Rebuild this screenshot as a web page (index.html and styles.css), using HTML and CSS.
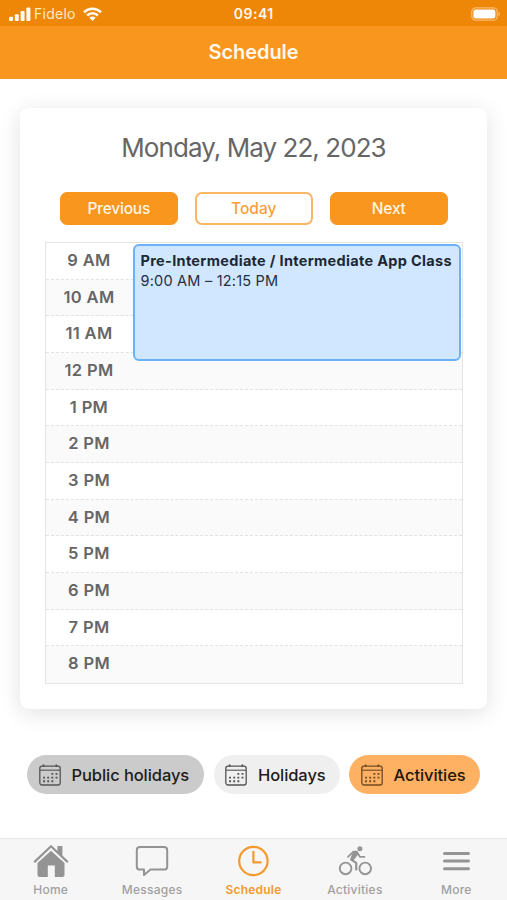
FILE: index.html
```html
<!DOCTYPE html>
<html lang="en">
<head>
<meta charset="utf-8">
<title>Schedule</title>
<link rel="stylesheet" href="styles.css">
</head>
<body>
<svg width="0" height="0" class="sprite">
  <symbol id="calendar" viewBox="0 0 22 22">
    <rect x="0.8" y="2.2" width="20.4" height="18.8" rx="2.2" fill="none" stroke="currentColor" stroke-width="1.3"/>
    <path d="M1 6.2H21" stroke="currentColor" stroke-width="1.1"/>
    <path d="M4.6 0.4V3M17.4 0.4V3" stroke="currentColor" stroke-width="1.8"/>
    <path d="M12.4 9.9H19M4.1 13.6H19M4.1 17.3H15" stroke="currentColor" stroke-width="1.9" stroke-dasharray="1.9 2.25" />
  </symbol>
</svg>
<header class="top">
  <div class="status">
    <div class="carrier">
      <svg class="signal" viewBox="0 0 22 14"><rect x="0" y="9.8" width="4" height="4.2" rx="1"/><rect x="5.8" y="7.2" width="4" height="6.8" rx="1"/><rect x="11.6" y="4" width="4" height="10" rx="1"/><rect x="17.4" y="0.4" width="4" height="13.6" rx="1"/></svg>
      <span class="carrier-name">Fidelo</span>
      <svg class="wifi" viewBox="0 0 19 14"><g fill="none" stroke="#fffaf0" stroke-width="2.6"><path d="M1 5.2A12.2 12.2 0 0 1 18 5.2"/><path d="M4.1 8.5A7.7 7.7 0 0 1 14.9 8.5"/></g><path d="M6.3 10.7A4.6 4.6 0 0 1 12.7 10.7L9.5 14Z" fill="#fffaf0"/></svg>
    </div>
    <span class="clock">09:41</span>
    <svg class="battery" viewBox="0 0 29 14"><rect x="0.8" y="0.8" width="25.4" height="12.4" rx="4" fill="none" stroke="#f9bb70" stroke-width="1.3"/><rect x="2.4" y="2.4" width="22" height="9.2" rx="2.3" fill="#fff"/><path d="M27.5 4.7Q29 5.5 29 7T27.5 9.3Z" fill="#f9bb70"/></svg>
  </div>
  <h1>Schedule</h1>
</header>
<main>
  <section class="card">
    <h2>Monday, May 22, 2023</h2>
    <div class="buttons">
      <button class="btn">Previous</button>
      <button class="btn outline">Today</button>
      <button class="btn">Next</button>
    </div>
    <div class="grid">
      <div class="row"><span>9 AM</span></div>
      <div class="row"><span>10 AM</span></div>
      <div class="row"><span>11 AM</span></div>
      <div class="row"><span>12 PM</span></div>
      <div class="row"><span>1 PM</span></div>
      <div class="row"><span>2 PM</span></div>
      <div class="row"><span>3 PM</span></div>
      <div class="row"><span>4 PM</span></div>
      <div class="row"><span>5 PM</span></div>
      <div class="row"><span>6 PM</span></div>
      <div class="row"><span>7 PM</span></div>
      <div class="row"><span>8 PM</span></div>
      <div class="event"><strong>Pre-Intermediate / Intermediate App Class</strong><span>9:00 AM – 12:15 PM</span></div>
    </div>
  </section>
  <div class="chips">
    <div class="chip public"><svg><use href="#calendar"/></svg><span>Public holidays</span></div>
    <div class="chip holidays"><svg><use href="#calendar"/></svg><span>Holidays</span></div>
    <div class="chip activities"><svg><use href="#calendar"/></svg><span>Activities</span></div>
  </div>
</main>
<nav class="tabs">
  <a class="tab"><svg viewBox="0 0 36 34"><path d="M18 6.8L31.5 19V31Q31.5 33 29.5 33H21.8V21.5H14.8V33H6.5Q4.5 33 4.5 31V19Z" fill="currentColor"/><path d="M1.8 17.6L18 2.2L34.2 17.6" fill="none" stroke="#f6f6f6" stroke-width="4.4"/><path d="M24.4 2H29.4V13.6L24.4 8.6Z" fill="currentColor"/><path d="M1.8 17.6L18 2.2L34.2 17.6" fill="none" stroke="currentColor" stroke-width="2.2" stroke-linecap="round" stroke-linejoin="round"/></svg><span>Home</span></a>
  <a class="tab"><svg viewBox="0 0 36 34"><path d="M6 3H30Q33.2 3 33.2 6.2V22.4Q33.2 25.6 30 25.6H16.5L10 31V25.6H6Q2.8 25.6 2.8 22.4V6.2Q2.8 3 6 3Z" fill="none" stroke="currentColor" stroke-width="2" stroke-linejoin="round"/></svg><span>Messages</span></a>
  <a class="tab active"><svg viewBox="0 0 36 34"><circle cx="18.4" cy="17" r="14.2" fill="none" stroke="currentColor" stroke-width="2.2"/><path d="M18.4 7.8V18.4H25.7" fill="none" stroke="currentColor" stroke-width="2.2" stroke-linecap="round" stroke-linejoin="round"/></svg><span>Schedule</span></a>
  <a class="tab"><svg viewBox="0 0 36 34"><g fill="none" stroke="currentColor" stroke-linejoin="round" stroke-linecap="round"><circle cx="8.6" cy="24.4" r="5.8" stroke-width="1.9"/><circle cx="28.2" cy="24.4" r="5.8" stroke-width="1.9"/><path d="M14.3 15.6L19.2 18.8V25.6" stroke-width="2.2"/><path d="M11 12.8L16.4 7.6H19.8L22.8 12.8H27.4" stroke-width="1.8"/></g><path d="M16.4 7.2H20.6L21.3 10.2L16.2 16.8L12.9 15.4Z" fill="currentColor"/><circle cx="22.9" cy="4.7" r="2.5" fill="currentColor"/></svg><span>Activities</span></a>
  <a class="tab"><svg viewBox="0 0 36 34"><path d="M6.5 9.5H30.5M6.5 17.1H30.5M6.5 24.7H30.5" fill="none" stroke="currentColor" stroke-width="3" stroke-linecap="round"/></svg><span>More</span></a>
</nav>
</body>
</html>
```
FILE: styles.css
```css
* { box-sizing: border-box; }
body {
  margin: 0;
  height: 900px;
  overflow: hidden;
  display: flex;
  flex-direction: column;
  background: #fff;
  font-family: Inter, "Liberation Sans", sans-serif;
}
.sprite { display: none; }
.top { height: 79px; background: #f8961d; color: #fff8ec; }
.status {
  height: 26px;
  display: grid;
  grid-template-columns: 1fr auto 1fr;
  align-items: center;
  padding: 1px 7px 0 9px;
  background: #ee8608;
}
.carrier { display: flex; align-items: center; }
.signal { width: 22px; height: 14px; fill: #fffaf0; }
.carrier-name { margin-left: 3px; width: 41px; font-size: 14px; line-height: 18px; letter-spacing: 0.25px; color: #ffe9c9; white-space: nowrap; }
.wifi { width: 19px; height: 14px; margin-left: 7.5px; }
.clock { font-size: 14px; font-weight: 600; line-height: 18px; letter-spacing: 0.5px; transform: translateX(-0.7px); }
.battery { width: 29px; height: 14px; justify-self: end; }
h1 { margin: 0; font-size: 20px; line-height: 53px; font-weight: 600; letter-spacing: -0.05px; text-align: center; }
main { flex: 1; padding: 29px 20px 0; }
.card {
  width: 467px;
  height: 601px;
  padding: 25px 25px 0;
  border-radius: 9px;
  background: #fff;
  box-shadow: 0 4px 22px rgba(0, 0, 0, 0.12);
}
h2 { margin: 0; font-size: 26px; line-height: 30px; font-weight: 400; letter-spacing: -0.94px; text-align: center; color: #666; }
.buttons { display: flex; justify-content: space-between; padding: 0 14px 0 14.5px; margin-top: 28.5px; }
.btn {
  width: 118.5px;
  height: 33.5px;
  padding: 0;
  border: 1.5px solid #f8961d;
  border-radius: 7px;
  background: #f8961d;
  color: #fff5e4;
  font: 500 15.5px/31px Inter, sans-serif;
  letter-spacing: -0.2px;
}
.btn.outline { background: #fff; color: #f8a03a; border: 2px solid #fab565; line-height: 29.5px; letter-spacing: 0; }
.grid { position: relative; width: 418px; margin-top: 17px; border: 1.5px solid #e4e4e4; }
.row { height: 36.67px; border-bottom: 1px dashed #e2e2e2; }
.row:nth-child(even) { background: #fafafa; }
.row:nth-child(12) { border-bottom: 0; }
.row span { display: block; width: 86px; text-align: center; font-size: 16.5px; line-height: 35px; font-weight: 600; letter-spacing: 0.35px; color: #666; }
.event {
  position: absolute;
  left: 86.5px;
  top: 1px;
  width: 328.5px;
  height: 117px;
  padding: 5px 6px;
  border: 2px solid #69b2f5;
  border-radius: 6px;
  background: #d1e7ff;
  color: #24313e;
  font-size: 14.5px;
  line-height: 20px;
  white-space: nowrap;
}
.event strong, .event span { display: block; }
.event strong { font-weight: 700; letter-spacing: 0.32px; color: #1c2733; }
.event span { letter-spacing: 0.21px; }
.chips { display: flex; gap: 9.5px; margin: 46px 0 0 7px; }
.chip { display: flex; align-items: center; height: 39px; padding-left: 11.5px; border-radius: 20px; font-size: 16.5px; font-weight: 500; letter-spacing: -0.08px; color: #1c1c1c; white-space: nowrap; }
.chip svg { width: 22px; height: 22px; color: #555; }
.chip span { margin-left: 11px; }
.public { width: 177px; background: #cbcbcb; }
.holidays { width: 126px; background: #efefef; }
.activities { width: 131px; background: #ffb163; }
.activities svg { color: #714a20; }
.activities span { color: #24180b; }
.tabs { display: grid; grid-template-columns: repeat(5, 1fr); height: 62px; background: #f6f6f6; border-top: 1px solid #e6e6e6; }
.tab { display: flex; flex-direction: column; align-items: center; padding-top: 5px; color: #949494; }
.tab svg { width: 36px; height: 34px; }
.tab span { margin-top: 4px; font-size: 12px; line-height: 15px; font-weight: 500; letter-spacing: 0.25px; color: #a0a0a0; }
.tab.active, .tab.active span { color: #f39a2e; }
.tab.active span { font-weight: 600; letter-spacing: 0.2px; }
```
